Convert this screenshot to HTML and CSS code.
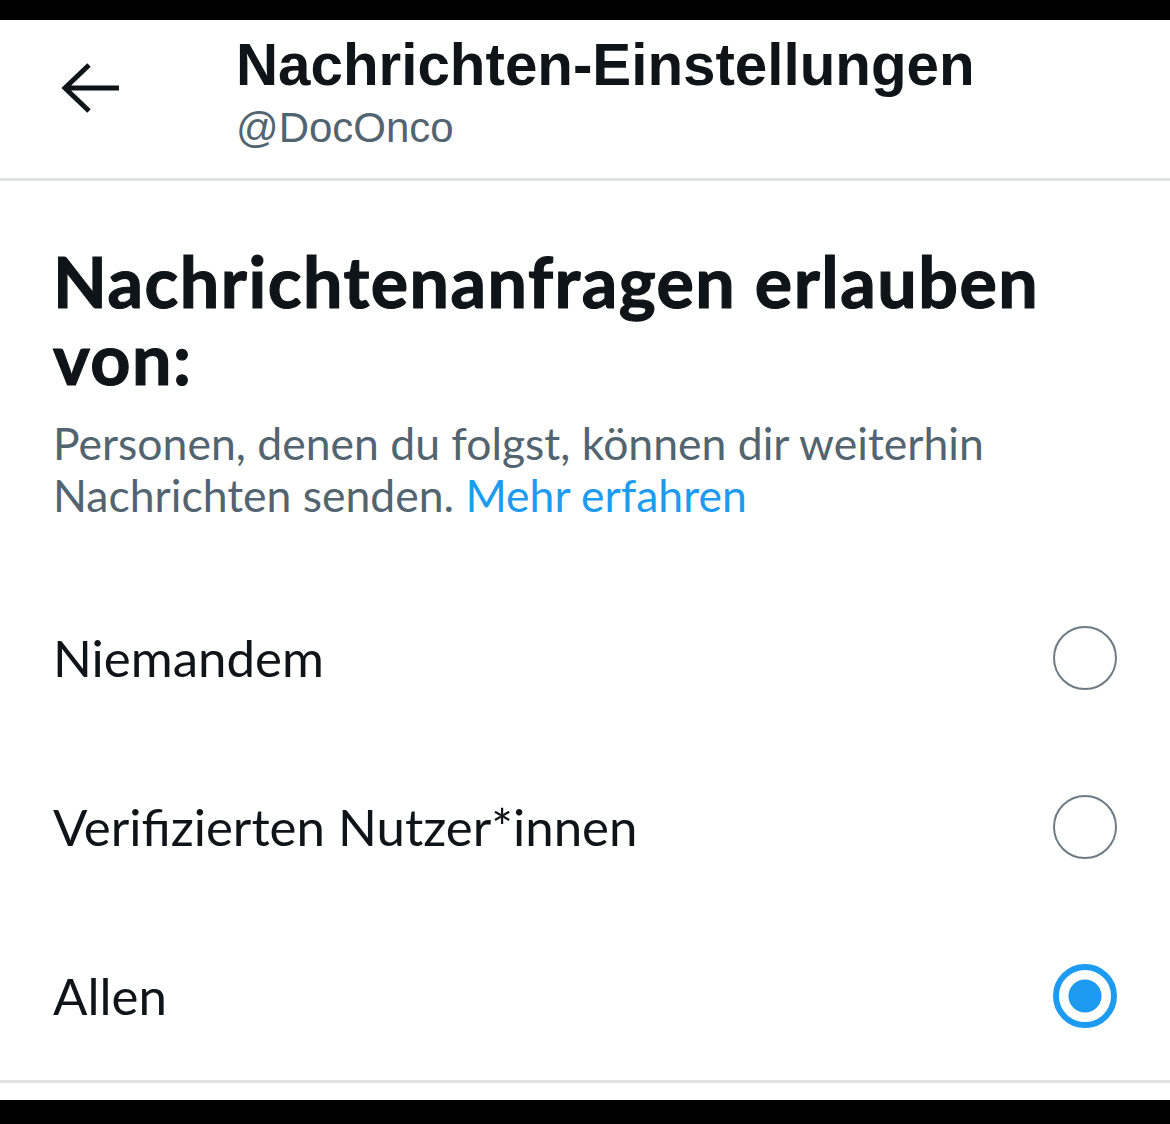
FILE: index.html
```html
<!DOCTYPE html>
<html lang="de">
<head>
    <meta charset="UTF-8">
    <title>Nachrichten-Einstellungen</title>
    <link rel="stylesheet" href="styles.css">
</head>
<body>
    <div class="screen">
        <div class="bar"></div>

        <header class="topbar">
            <button class="back" aria-label="Zurück">
                <svg viewBox="0 0 60 52" width="60" height="52">
                    <path d="M29 3L5 26l24 23M5 26h54"/>
                </svg>
            </button>
            <div class="titles">
                <h1>Nachrichten-Einstellungen</h1>
                <p class="handle">@DocOnco</p>
            </div>
        </header>

        <main class="content">
            <h2>Nachrichtenanfragen erlauben von:</h2>
            <p class="desc">Personen, denen du folgst, können dir weiterhin Nachrichten senden. <a href="#">Mehr erfahren</a></p>

            <ul class="options">
                <li><span>Niemandem</span><i class="radio"></i></li>
                <li><span>Verifizierten Nutzer*innen</span><i class="radio"></i></li>
                <li><span>Allen</span><i class="radio checked"></i></li>
            </ul>
        </main>

        <div class="bar bottom"></div>
    </div>
</body>
</html>
```

FILE: styles.css
```css
body{margin:0;background:#fff;}
ul{list-style:none;margin:0;padding:0;}

.screen{
    display:flex;
    flex-direction:column;
    height:1124px;
    color:#0f1419;
    font-family:Lato,"Noto Sans",sans-serif;
}

.bar{height:20px;background:#000;flex:none;}
.bar.bottom{margin-top:auto;height:24px;}

/* header */
.topbar{
    display:flex;
    align-items:flex-start;
    height:158px;
    border-bottom:3px solid #e1e3e4;
}
.back{
    flex:none;
    margin:42px 0 0 60px;
    padding:0;
    width:60px;
    height:52px;
    border:0;
    background:none;
}
.back svg{display:block;fill:none;stroke:#0f1419;stroke-width:5;}
.titles{margin-left:116px;font-family:"Liberation Sans",Arial,sans-serif;}
.titles h1{
    margin:7px 0 0;
    font-size:58.3px;
    line-height:76px;
    font-weight:700;
}
.handle{
    margin:-2px 0 0;
    font-size:42px;
    line-height:54px;
    color:#536471;
}

/* content */
.content{padding:0 53px;border-bottom:3px solid #e2e2e2;}
.content h2{
    margin:62px 0 0;
    max-width:1010px;
    font-size:70px;
    line-height:77px;
    font-weight:700;
    letter-spacing:1.5px;
    -webkit-text-stroke:1.2px #0f1419;
}
.desc{
    margin:20px 0 0;
    max-width:1000px;
    font-size:44.5px;
    line-height:52px;
    color:#536471;
}
.desc a{color:#1d9bf0;text-decoration:none;}

.options{margin-top:52px;}
.options li{
    display:flex;
    align-items:center;
    justify-content:space-between;
    height:169px;
    font-size:51px;
}
.radio{
    box-sizing:border-box;
    width:64px;
    height:64px;
    border:2.5px solid #6e7b85;
    border-radius:50%;
}
.radio.checked{
    border:6px solid #1d9bf0;
    background:radial-gradient(circle,#1d9bf0 16px,#fff 17px);
}
```
